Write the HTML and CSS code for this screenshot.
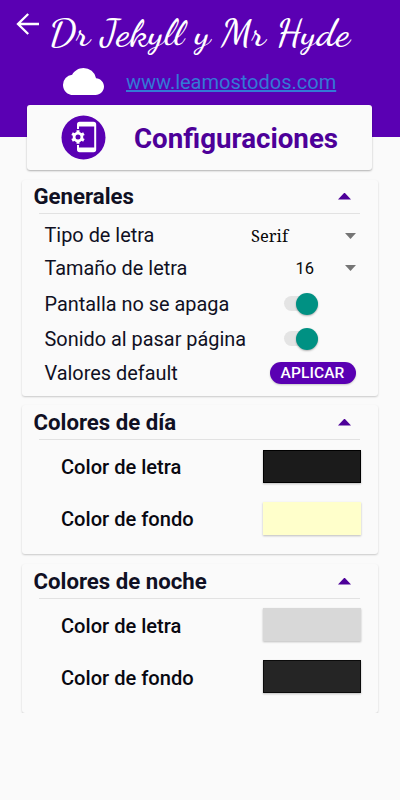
FILE: index.html
```html
<!DOCTYPE html>
<html lang="es">
<head>
<meta charset="utf-8">
<title>Configuraciones</title>
<link rel="stylesheet" href="styles.css">
</head>
<body>
<header class="top">
  <div class="bar">
    <svg class="back" width="24" height="24" viewBox="0 0 24 24"><path d="M23 12H2.500M12.200 2L2 12L12.200 22" fill="none" stroke="#fff" stroke-width="2.300"/></svg>
    <svg class="title" width="320" height="60" viewBox="0 0 320 60"><text x="3" y="45" textLength="301" lengthAdjust="spacingAndGlyphs">Dr Jekyll y Mr Hyde</text></svg>
  </div>
  <div class="link-row">
    <svg class="cloud" width="41" height="27" viewBox="0 4 24 16" preserveAspectRatio="none"><path fill="#fff" d="M19.350 10.040A7.490 7.490 0 0 0 12 4C9.110 4 6.600 5.640 5.350 8.040A5.994 5.994 0 0 0 0 14c0 3.310 2.690 6 6 6h13c2.760 0 5-2.240 5-5 0-2.640-2.050-4.780-4.650-4.960z"/></svg>
    <a class="link">www.leamostodos.com</a>
  </div>
</header>
<main>
  <section class="banner">
    <svg class="badge" width="45" height="45" viewBox="0 0 45 45">
      <circle cx="22.500" cy="22.500" r="22" fill="#5a00b3"/>
      <path d="M17 14V9.500Q17 7.800 18.700 7.800H32.500Q34.200 7.800 34.200 9.500V34.500Q34.200 36.200 32.500 36.200H18.700Q17 36.200 17 34.500V30" fill="none" stroke="#fff" stroke-width="2"/>
      <path d="M17 8H34V11.500H17ZM17 32.500H34V36H17Z" fill="#fff"/>
      <circle cx="17" cy="22" r="3.900" fill="none" stroke="#fff" stroke-width="2.800"/>
      <path d="M17 15.200V18M17 26V28.800M11.100 18.600L13.500 20M20.500 24L22.900 25.400M11.100 25.400L13.500 24M20.500 20L22.900 18.600" stroke="#fff" stroke-width="3"/>
    </svg>
    <h1>Configuraciones</h1>
  </section>

  <section class="card general">
    <div class="head"><h2>Generales</h2><i class="up"></i></div>
    <div class="row"><span>Tipo de letra</span><span class="value serif">Serif</span><i class="down"></i></div>
    <div class="row"><span>Tamaño de letra</span><span class="value num">16</span><i class="down"></i></div>
    <div class="row tall first"><span>Pantalla no se apaga</span><span class="switch"></span></div>
    <div class="row tall"><span>Sonido al pasar página</span><span class="switch"></span></div>
    <div class="row last"><span>Valores default</span><button class="apply">APLICAR</button></div>
  </section>

  <section class="card colors">
    <div class="head"><h2>Colores de día</h2><i class="up"></i></div>
    <div class="color"><span>Color de letra</span><i class="swatch ink"></i></div>
    <div class="color"><span>Color de fondo</span><i class="swatch cream"></i></div>
  </section>

  <section class="card colors night">
    <div class="head"><h2>Colores de noche</h2><i class="up"></i></div>
    <div class="color"><span>Color de letra</span><i class="swatch gray"></i></div>
    <div class="color"><span>Color de fondo</span><i class="swatch coal"></i></div>
  </section>
</main>
</body>
</html>
```
FILE: styles.css
```css
* { box-sizing: border-box; }
body { margin: 0; height: 800px; overflow: hidden; background: #fafafa; font-family: Roboto, sans-serif; color: #101023; }
.top { height: 137px; background: #5a00b3; }
.bar { display: flex; height: 60px; padding-left: 16px; }
.back { margin-top: 12px; }
.title { margin-left: 6px; }
.title text { font-family: "Dancing Script", "Z003", "URW Chancery L", cursive; font-size: 37px; font-weight: 500; fill: #fff; }
.link-row { display: flex; align-items: center; height: 42px; padding-left: 63px; }
.link { margin: 2px 0 0 22px; font-size: 20px; line-height: 24px; color: #3478d6; text-decoration: underline; }
.banner { display: flex; align-items: center; width: 345px; height: 65px; margin: -32px 0 0 27px; padding-left: 34px; background: #fafafa; border-radius: 3px; box-shadow: 0 1px 2px rgba(0,0,0,.3); }
h1 { margin: 2px 0 0 28px; font-size: 27.7px; line-height: 36px; font-weight: 700; color: #4d0099; }
.card { width: 356px; margin: 10px 0 0 22px; border-radius: 3px; box-shadow: 0 1px 2px rgba(0,0,0,.2); }
.general { height: 216px; }
.colors { height: 149px; }
.general + .colors { margin-top: 9px; }
.night { clip-path: inset(-3px -3px 0 -3px); }
.head { display: flex; align-items: center; justify-content: space-between; height: 34px; margin: 0 18px 0 17px; padding: 0 9px 0 0; border-bottom: 1px solid #e2e2e2; }
.colors .head { height: 35px; padding-top: 1px; }
h2 { margin: -2px 0 0 -5.5px; font-size: 22.2px; line-height: 30px; font-weight: 700; }
.up { width: 13px; height: 7px; margin-top: -1px; background: #4d0099; clip-path: polygon(50% 0, 100% 100%, 0 100%); }
.down { width: 11px; height: 6px; margin-right: 22px; background: #757575; clip-path: polygon(0 0, 100% 0, 50% 100%); }
.row { display: flex; align-items: center; height: 32px; padding-left: 22.5px; font-size: 19.9px; }
.row > span:first-child { flex: 1; white-space: nowrap; }
.head + .row { margin-top: 6px; }
.head + .row span { margin-top: -1px; }
.tall { height: 35px; }
.first { margin-top: 3px; }
.value { color: #080808; font-size: 16.500px; }
.serif { font-family: "Noto Serif", "Liberation Serif", serif; margin-right: 57px; font-size: 16.5px; }
.head + .row .serif { margin-top: -2px; }
.num { margin-right: 31px; }
.switch { width: 34px; height: 15px; margin-right: 60.5px; border-radius: 8px; background: #e4e4e4; display: flex; align-items: center; justify-content: flex-end; }
.switch::after { content: ""; flex: none; width: 22px; height: 22px; border-radius: 50%; background: #009183; box-shadow: 0 1px 2px rgba(0,0,0,.3); }
.tall .switch { margin-top: -2px; }
.apply { width: 86px; height: 22px; margin: -1px 22.5px 0 0; padding: 0; border: 0; border-radius: 11px; background: #5a00b3; color: #fff; font: 500 15.500px/22px Roboto, sans-serif; letter-spacing: .1px; box-shadow: 0 1px 2px rgba(0,0,0,.2); }
.color { display: flex; align-items: center; justify-content: space-between; height: 52px; padding: 0 17px 0 39px; font-size: 20.1px; font-weight: 500; color: #080810; }
.color span { margin-top: 1px; }
.swatch { width: 98px; height: 33px; box-shadow: 0 1px 2px rgba(0,0,0,.25); }
.night .swatch { margin-top: -1px; }
.ink { background: #1b1b1b; border: 1px solid #000; }
.cream { background: #ffffcb; }
.gray { background: #d8d8d8; }
.coal { background: #252525; border: 1px solid #0b0b0b; }
```
